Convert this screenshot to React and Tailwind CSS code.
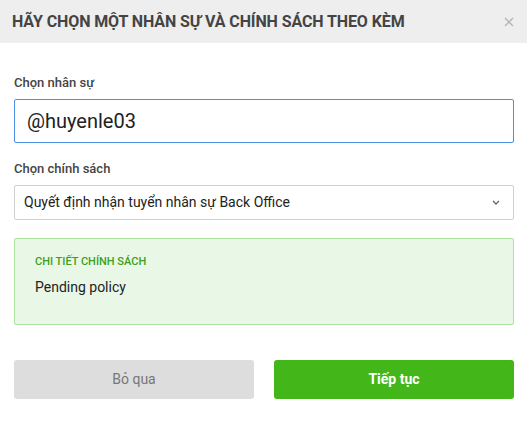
import React from 'react';

const App = () => {
  return (
    <div className="w-[527px] h-[422px] bg-white font-['Roboto',sans-serif] text-[#333]">
      {/* Header */}
      <div className="h-[43px] bg-[#eeeeee] flex items-center justify-between pl-[12px] pr-[12px]">
        <h1 className="text-[16px] font-bold text-[#444] tracking-[-0.1px]">
          HÃY CHỌN MỘT NHÂN SỰ VÀ CHÍNH SÁCH THEO KÈM
        </h1>
        <svg width="10" height="10" viewBox="0 0 10 10" className="mr-[1px]">
          <path d="M1 1L9 9M9 1L1 9" stroke="#b5b5b5" strokeWidth="1.4" />
        </svg>
      </div>

      {/* Body */}
      <div className="pl-[14px] pr-[13px] pt-[32px]">
        <label className="block text-[13px] font-medium text-[#444] leading-[16px]">Chọn nhân sự</label>
        <div className="mt-[8px] h-[44px] border border-[#4a90e2] rounded-[2px] flex items-center pl-[12px] text-[20px] text-[#222]">
          @huyenle03
        </div>

        <label className="block mt-[18px] text-[13px] font-medium text-[#444] leading-[16px]">Chọn chính sách</label>
        <div className="mt-[8px] h-[35px] border border-[#d0d0d0] rounded-[2px] flex items-center justify-between pl-[9px] pr-[13px] text-[14px] text-[#222]">
          <span>Quyết định nhận tuyển nhân sự Back Office</span>
          <svg width="8" height="5" viewBox="0 0 8 5">
            <path d="M1 1L4 4L7 1" stroke="#666" strokeWidth="1.3" fill="none" />
          </svg>
        </div>

        <div className="mt-[18px] h-[87px] border border-[#abe49c] bg-[#e9f7e7] rounded-[2px] pl-[20px] pt-[16px]">
          <div className="text-[11px] font-medium text-[#3d9f1c] leading-[13px]">CHI TIẾT CHÍNH SÁCH</div>
          <div className="mt-[9px] text-[14px] text-[#222]">Pending policy</div>
        </div>

        <div className="mt-[35px] flex gap-[20px]">
          <button className="flex-1 h-[39px] rounded-[3px] bg-[#dddddd] text-[14px] text-[#777]">Bỏ qua</button>
          <button className="flex-1 h-[39px] rounded-[3px] bg-[#43b719] text-[14px] font-bold text-white">Tiếp tục</button>
        </div>
      </div>
    </div>
  );
};

export default App;
